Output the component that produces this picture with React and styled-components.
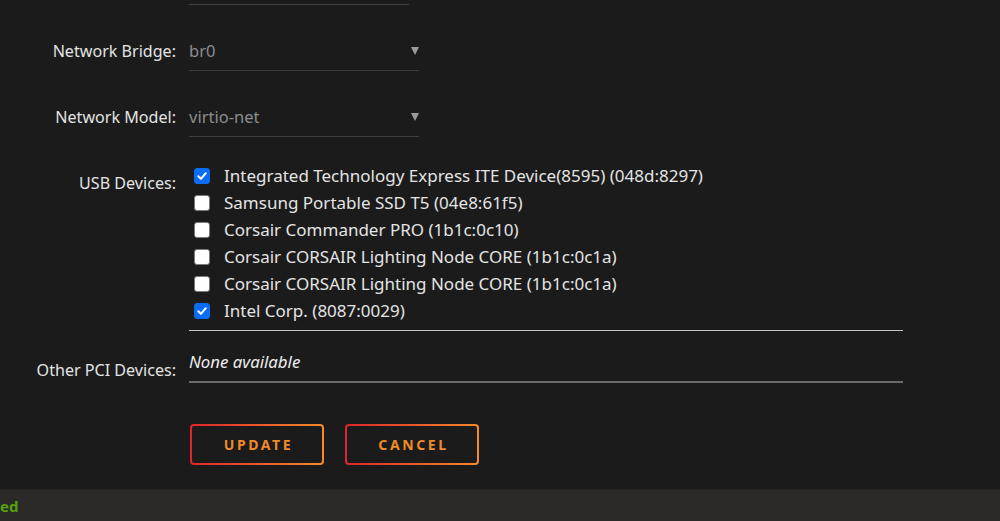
import React from "react";
import styled, { createGlobalStyle } from "styled-components";

const Global = createGlobalStyle`
  html, body { margin: 0; padding: 0; background: #1b1b1b; }
  body { font-family: "Noto Sans", "Open Sans", sans-serif; color: #e2e2e2; }
  * { box-sizing: border-box; }
`;

const Page = styled.div`
  height: 100vh;
  display: flex;
  flex-direction: column;
  overflow: hidden;
`;

const Main = styled.main`
  flex: 1;
  display: flex;
  flex-direction: column;
  padding-top: 4px;
`;

const Row = styled.div`
  display: grid;
  grid-template-columns: 176px 1fr;
  column-gap: 13px;
  align-items: start;
  margin-top: ${(p) => p.$mt || 0}px;
`;

const Label = styled.div`
  text-align: right;
  font-size: 16.1px;
  line-height: 20px;
  padding-top: ${(p) => p.$pt || 5}px;
  color: #e4e4e4;
  white-space: nowrap;
`;

const Stub = styled.div`
  width: 220px;
  height: 1px;
  background: #404040;
`;

const Select = styled.div`
  width: 230px;
  display: flex;
  align-items: flex-start;
  justify-content: space-between;
  padding: 5px 0 9px 0;
  border-bottom: 1px solid #3c3c3c;
  font-size: 16.5px;
  line-height: 20px;
  color: #8c8c8c;
`;

const Arrow = styled.svg`
  width: 8px;
  height: 8px;
  margin-top: 6px;
  flex: none;
`;

const DeviceList = styled.div`
  width: 714px;
  padding-bottom: 6px;
  border-bottom: 1px solid #c4c4c4;
`;

const Device = styled.label`
  display: flex;
  align-items: center;
  height: 27px;
  padding-left: 5px;
  font-size: 17px;
  color: #e4e4e4;
  white-space: nowrap;
`;

const Box = styled.span`
  width: 16px;
  height: 16px;
  margin-right: 14px;
  border-radius: 3px;
  flex: none;
  display: flex;
  align-items: center;
  justify-content: center;
  background: ${(p) => (p.$checked ? "#0b6cf5" : "#ffffff")};
  border: 1px solid ${(p) => (p.$checked ? "#0b6cf5" : "#7a7a7a")};
`;

const Field = styled.div`
  width: 714px;
  padding: 5px 0 9px 0;
  border-bottom: 2px solid #6a6a6a;
  font-size: 16.8px;
  line-height: 20px;
  font-style: italic;
  color: #ececec;
`;

const Buttons = styled.div`
  display: flex;
  gap: 21px;
  padding-left: 1px;
`;

const Button = styled.button`
  width: 134px;
  height: 41px;
  border: 2px solid transparent;
  border-radius: 4px;
  background: linear-gradient(#1b1b1b, #1b1b1b) padding-box,
    linear-gradient(90deg, #e0242a, #f58a2c) border-box;
  color: #f08a2a;
  font-family: "Noto Sans", sans-serif;
  font-weight: 700;
  font-size: 14px;
  letter-spacing: 2.6px;
  padding: 0 0 0 3px;
  cursor: pointer;
`;

const Footer = styled.footer`
  height: 32px;
  flex: none;
  background: #2b2a28;
  border-top: 1px solid #222;
  display: flex;
  align-items: center;
`;

const Status = styled.span`
  font-size: 15px;
  font-weight: 700;
  color: #56a10f;
  line-height: 1;
  margin-top: 2px;
`;

const devices = [
  { name: "Integrated Technology Express ITE Device(8595) (048d:8297)", checked: true },
  { name: "Samsung Portable SSD T5 (04e8:61f5)", checked: false },
  { name: "Corsair Commander PRO (1b1c:0c10)", checked: false },
  { name: "Corsair CORSAIR Lighting Node CORE (1b1c:0c1a)", checked: false },
  { name: "Corsair CORSAIR Lighting Node CORE (1b1c:0c1a)", checked: false },
  { name: "Intel Corp. (8087:0029)", checked: true },
];

const Check = () => (
  <svg width="12" height="12" viewBox="0 0 12 12">
    <path d="M2.3 6.3 L4.9 8.8 L9.8 3.2" fill="none" stroke="#fff" strokeWidth="2" strokeLinecap="round" strokeLinejoin="round" />
  </svg>
);

const SelectField = ({ value }) => (
  <Select>
    <span>{value}</span>
    <Arrow viewBox="0 0 8 8">
      <polygon points="0,0 8,0 4,8" fill="#9a9a9a" />
    </Arrow>
  </Select>
);

export default function App() {
  return (
    <Page>
      <Global />
      <Main>
        <Row>
          <span />
          <Stub />
        </Row>
        <Row $mt={31}>
          <Label>Network Bridge:</Label>
          <SelectField value="br0" />
        </Row>
        <Row $mt={31}>
          <Label>Network Model:</Label>
          <SelectField value="virtio-net" />
        </Row>
        <Row $mt={25}>
          <Label $pt={11}>USB Devices:</Label>
          <DeviceList>
            {devices.map((d, i) => (
              <Device key={i}>
                <Box $checked={d.checked}>{d.checked && <Check />}</Box>
                {d.name}
              </Device>
            ))}
          </DeviceList>
        </Row>
        <Row $mt={16}>
          <Label $pt={13}>Other PCI Devices:</Label>
          <Field>None available</Field>
        </Row>
        <Row $mt={41}>
          <span />
          <Buttons>
            <Button>UPDATE</Button>
            <Button>CANCEL</Button>
          </Buttons>
        </Row>
      </Main>
      <Footer>
        <Status>ed</Status>
      </Footer>
    </Page>
  );
}
